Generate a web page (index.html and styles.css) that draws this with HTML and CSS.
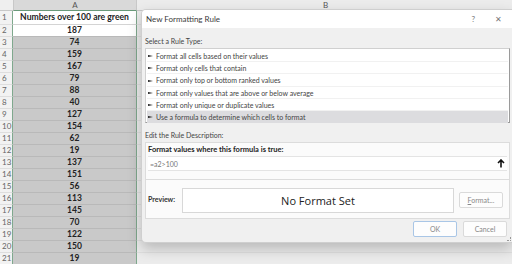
FILE: index.html
```html
<!DOCTYPE html>
<html lang="en">
<head>
    <meta charset="UTF-8">
    <title>New Formatting Rule</title>
    <link rel="stylesheet" href="styles.css">
</head>
<body>
    <div class="sheet">
        <div class="corner"></div>
        <div class="col-head col-a">A</div>
        <div class="col-head col-b">B</div>

        <div class="row-num first">1</div>
        <div class="cell title">Numbers over 100 are green</div>
        <div class="rest first"></div>

        <div class="row-num">2</div><div class="cell active">187</div><div class="rest"></div>
        <div class="row-num">3</div><div class="cell">74</div><div class="rest"></div>
        <div class="row-num">4</div><div class="cell">159</div><div class="rest"></div>
        <div class="row-num">5</div><div class="cell">167</div><div class="rest"></div>
        <div class="row-num">6</div><div class="cell">79</div><div class="rest"></div>
        <div class="row-num">7</div><div class="cell">88</div><div class="rest"></div>
        <div class="row-num">8</div><div class="cell">40</div><div class="rest"></div>
        <div class="row-num">9</div><div class="cell">127</div><div class="rest"></div>
        <div class="row-num">10</div><div class="cell">154</div><div class="rest"></div>
        <div class="row-num">11</div><div class="cell">62</div><div class="rest"></div>
        <div class="row-num">12</div><div class="cell">19</div><div class="rest"></div>
        <div class="row-num">13</div><div class="cell">137</div><div class="rest"></div>
        <div class="row-num">14</div><div class="cell">151</div><div class="rest"></div>
        <div class="row-num">15</div><div class="cell">56</div><div class="rest"></div>
        <div class="row-num">16</div><div class="cell">113</div><div class="rest"></div>
        <div class="row-num">17</div><div class="cell">145</div><div class="rest"></div>
        <div class="row-num">18</div><div class="cell">70</div><div class="rest"></div>
        <div class="row-num">19</div><div class="cell">122</div><div class="rest"></div>
        <div class="row-num">20</div><div class="cell">150</div><div class="rest"></div>
        <div class="row-num">21</div><div class="cell">19</div><div class="rest"></div>
    </div>

    <div class="dialog">
        <div class="dialog-title">
            <span>New Formatting Rule</span>
            <span class="title-btns"><span class="help">?</span><span class="close">&#x2715;</span></span>
        </div>
        <div class="dialog-body">
            <div class="section-label">Select a Rule Type:</div>
            <ul class="rule-list">
                <li>Format all cells based on their values</li>
                <li>Format only cells that contain</li>
                <li>Format only top or bottom ranked values</li>
                <li>Format only values that are above or below average</li>
                <li>Format only unique or duplicate values</li>
                <li class="selected">Use a formula to determine which cells to format</li>
            </ul>

            <div class="section-label edit">Edit the Rule Description:</div>
            <div class="panel">
                <div class="formula">
                    <div class="formula-label">Format values where this formula is true:</div>
                    <div class="formula-input">
                        <span>=a2&gt;100</span>
                        <svg class="collapse" width="8" height="9" viewBox="0 0 8 9">
                            <path d="M4 1 L4 8.5 M1 4 L4 1 L7 4" stroke="#111" stroke-width="1.6" fill="none"/>
                        </svg>
                    </div>
                </div>
                <div class="preview">
                    <span class="preview-label">Preview:</span>
                    <div class="preview-box">No Format Set</div>
                    <button class="btn format-btn"><u>F</u>ormat...</button>
                </div>
            </div>

            <div class="actions">
                <button class="btn ok">OK</button>
                <button class="btn">Cancel</button>
            </div>
        </div>
        <div class="grip"></div>
    </div>
</body>
</html>
```

FILE: styles.css
```css
body {
    margin: 0;
    width: 512px;
    height: 264px;
    overflow: hidden;
    background-color: #e6e6e6;
    font-family: Lato, "Open Sans", sans-serif;
}

/* spreadsheet behind the dialog */
.sheet {
    display: grid;
    grid-template-columns: 13px 124px 1fr;
    grid-template-rows: 11px 14px;
    grid-auto-rows: 12px;
    width: 512px;
}
.corner, .col-head {
    background-color: #efefef;
    border-bottom: 1px solid #c8c8c8;
    box-sizing: border-box;
}
.col-head {
    font-size: 8px;
    color: #555;
    line-height: 10px;
}
.col-a {
    text-align: center;
    background-color: #d9d9d9;
    border-left: 1px solid #c8c8c8;
    border-right: 1px solid #c8c8c8;
    border-bottom: 1px solid #6a9a7a;
}
.col-b {
    padding-left: 186px;
    background-color: #ececec;
}
.row-num {
    font-size: 8px;
    color: #666;
    padding-left: 2px;
    line-height: 11px;
    background-color: #f2f2f2;
    border-bottom: 1px solid #dedede;
    border-right: 1px solid #7fa88d;
    box-sizing: border-box;
}
.row-num.first {
    line-height: 13px;
}
.cell {
    font-size: 8.5px;
    font-weight: bold;
    color: #222;
    text-align: center;
    line-height: 11px;
    white-space: nowrap;
    background-color: #c9c9c9;
    border-bottom: 1px solid #b9b9b9;
    border-right: 1px solid #7fa88d;
    box-sizing: border-box;
}
.cell.title {
    font-size: 8.6px;
    line-height: 13px;
    background-color: #fff;
    border-bottom: 1px solid #d4d4d4;
}
.cell.active {
    background-color: #fff;
}
.rest {
    background-color: #ececec;
    border-bottom: 1px solid #e0e0e0;
}

/* dialog */
.dialog {
    position: absolute;
    left: 141px;
    top: 9px;
    width: 371px;
    height: 234px;
    background-color: #f0f0f0;
    border: 1px solid #cfcfcf;
    border-right: none;
    border-radius: 5px 0 0 5px;
    box-shadow: 0 6px 14px rgba(0, 0, 0, 0.22);
    box-sizing: border-box;
    overflow: hidden;
}
.dialog-title {
    height: 18px;
    background-color: #fff;
    display: flex;
    justify-content: space-between;
    align-items: center;
    padding-left: 4px;
    font-size: 8px;
    color: #3a3a3a;
}
.title-btns {
    display: flex;
    gap: 20px;
    padding-right: 10px;
    color: #777;
    font-size: 8px;
}
.dialog-body {
    padding: 0 2px 0 3px;
}
.section-label {
    font-size: 7px;
    color: #444;
    margin-top: 8px;
    line-height: 10px;
}
.section-label.edit {
    margin-top: 7px;
}
.rule-list {
    list-style: none;
    margin: 2px 0 0;
    padding: 1px;
    background-color: #fff;
    border: 1px solid #9a9a9a;
    border-top-color: #d0d0d0;
    border-left-color: #d0d0d0;
    height: 75px;
    box-sizing: border-box;
}
.rule-list li {
    font-size: 7px;
    color: #444;
    height: 12.2px;
    line-height: 12px;
    padding-left: 1px;
    border-bottom: 1px solid #f1f1f1;
    box-sizing: border-box;
}
.rule-list li::before {
    content: "";
    display: inline-block;
    width: 0;
    height: 0;
    border-left: 5px solid #222;
    border-top: 1.5px solid transparent;
    border-bottom: 1.5px solid transparent;
    vertical-align: middle;
    margin-right: 3px;
    position: relative;
    top: -1px;
}
.rule-list li.selected {
    background-color: #dcdcdf;
    border-bottom: none;
}
.panel {
    margin-top: 2px;
    height: 77px;
    background-color: #fbfbfb;
    border: 1px solid #dcdcdc;
    box-sizing: border-box;
}
.formula {
    padding: 2px 2px 0;
    border-bottom: 1px solid #dcdcdc;
    height: 37px;
    box-sizing: border-box;
}
.formula-label {
    font-size: 7.5px;
    font-weight: bold;
    color: #222;
    line-height: 10px;
}
.formula-input {
    display: flex;
    justify-content: space-between;
    align-items: center;
    height: 13px;
    margin-top: 1px;
    padding: 0 2px 0 2px;
    background-color: #fff;
    border-top: 1px solid #e4e4e4;
    border-bottom: 1px solid #e4e4e4;
    font-size: 7px;
    color: #777;
}
.preview {
    display: flex;
    align-items: center;
    height: 38px;
    padding-left: 2px;
}
.preview-label {
    font-size: 7px;
    font-weight: bold;
    color: #333;
    width: 34px;
}
.preview-box {
    width: 272px;
    height: 25px;
    background-color: #fff;
    border: 1px solid #d8d8d8;
    box-sizing: border-box;
    display: flex;
    align-items: center;
    justify-content: center;
    font-family: "Open Sans", sans-serif;
    font-size: 11px;
    color: #222;
    margin-top: 2px;
}
.btn {
    height: 16px;
    width: 44px;
    padding: 0;
    background-color: #fdfdfd;
    border: 1px solid #dadada;
    border-radius: 2px;
    font-family: inherit;
    font-size: 7px;
    color: #888;
}
.format-btn {
    margin-left: 5px;
    margin-top: 2px;
}
.actions {
    display: flex;
    justify-content: flex-end;
    gap: 6px;
    margin-top: 2px;
    padding-right: 3px;
}
.btn.ok {
    border-color: #a9c6e6;
}
.grip {
    position: absolute;
    right: 1px;
    bottom: 1px;
    width: 3px;
    height: 3px;
    border-right: 1px dotted #999;
    border-bottom: 1px dotted #999;
}
```
